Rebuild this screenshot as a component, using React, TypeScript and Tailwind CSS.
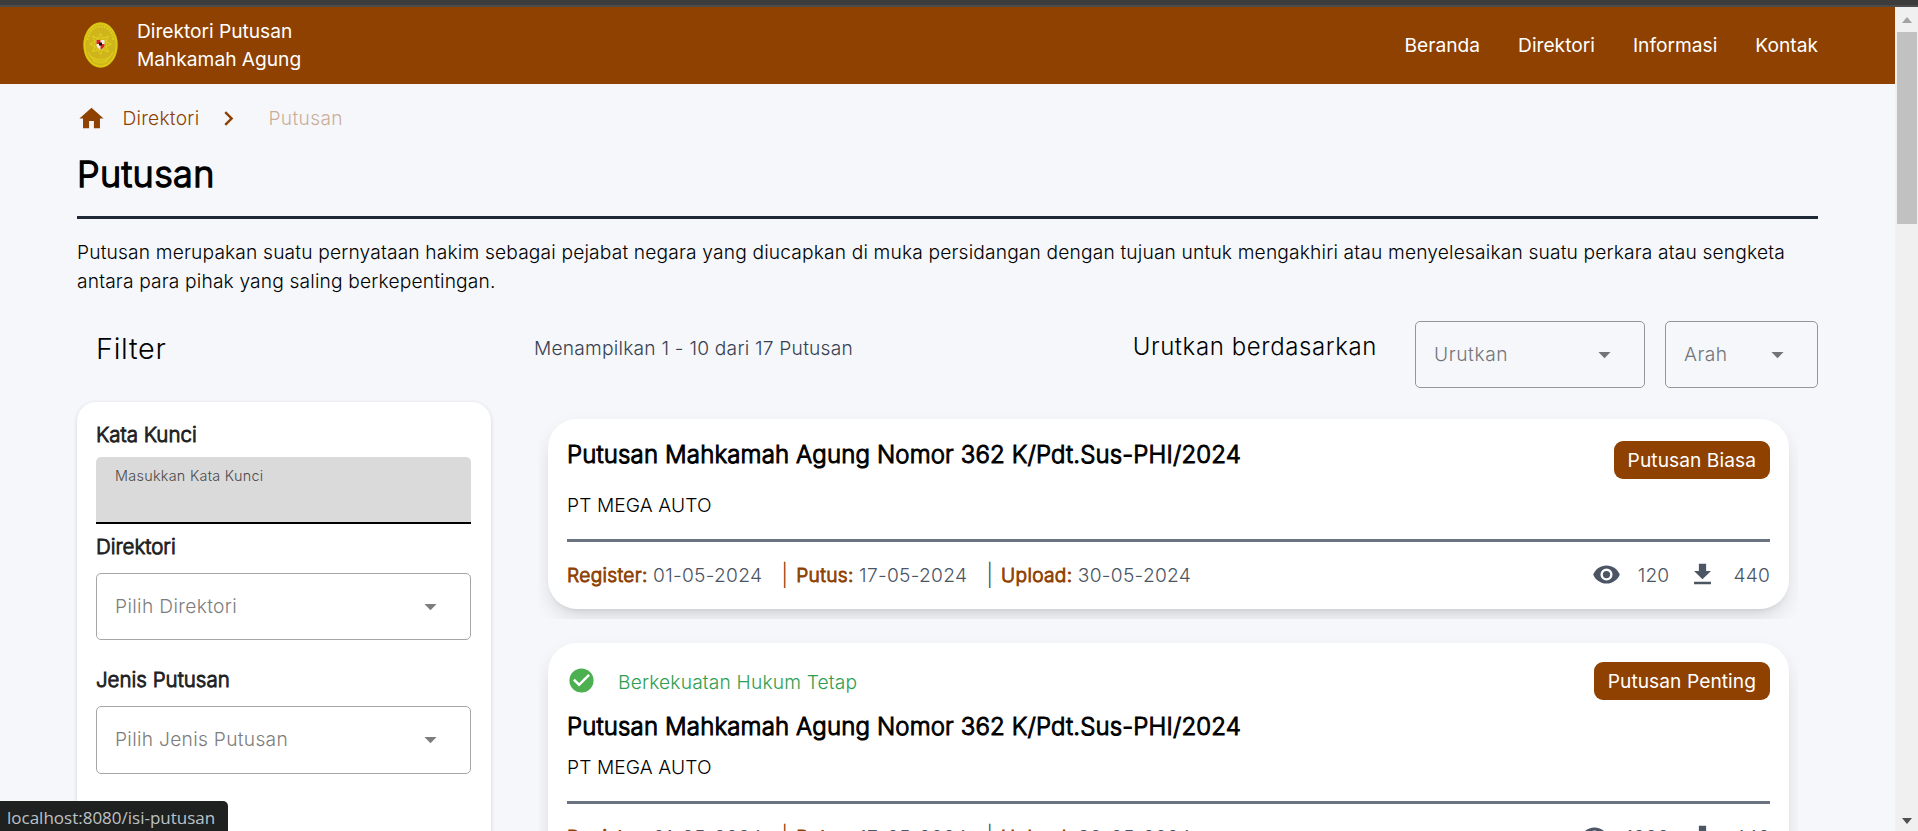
import React from "react";

const menu = ["Beranda", "Direktori", "Informasi", "Kontak"];

function Logo() {
  const rays = Array.from({ length: 8 }, (_, i) => i * 45);
  return (
    <svg className="block h-[46px] w-[35px]" viewBox="0 0 35 46">
      <ellipse cx="17.5" cy="23" rx="17.2" ry="22.8" fill="#dbc813" />
      <ellipse cx="17.5" cy="23" rx="15" ry="20.4" fill="#cfb41c" />
      <path d="M4.500 18C7 7 12 4.500 17.500 4.500S28 7 30.500 18" fill="none" stroke="#dfd01c" strokeWidth="2" strokeDasharray="1.7 1.3" />
      <path d="M5 30c4 10 21 10 25 0M7 34c5 7 16 7 21 0M10 38c4 4 11 4 15 0" fill="none" stroke="#dcca1c" strokeWidth="1.1" />
      {rays.map((r) => (
        <path key={r} d="M15.200 16.500 17.500 11l2.300 5.500z" fill="none" stroke="#dfd01c" strokeWidth="1" transform={`rotate(${r} 17.5 22)`} />
      ))}
      <circle cx="17.5" cy="22" r="6" fill="#cfb41c" stroke="#dcca1c" strokeWidth="0.8" />
      <path d="M13.500 18h8v5c0 2-2 3.500-4 4.500-2-1-4-2.500-4-4.500z" fill="#f3efe6" />
      <path d="M13.500 18h4v4h-4zM17.500 22h4v1c0 2-2 3.500-4 4.500z" fill="#d8261c" />
      <path d="M16 20.500h3v3h-3z" fill="#15130f" />
    </svg>
  );
}

function Arrow({ className }: { className: string }) {
  return (
    <svg className={`block h-[29px] w-[29px] ${className}`} viewBox="0 0 24 24" fill="currentColor">
      <path d="M7 10l5 5 5-5z" />
    </svg>
  );
}

function Select({ label, className, arrow }: { label: string; className: string; arrow: string }) {
  return (
    <div className={`flex items-center justify-between rounded-[5px] border pl-[18px] ${className}`}>
      <span>{label}</span>
      <Arrow className={arrow} />
    </div>
  );
}

type Item = { badge: string; views: string; downloads: string; final: boolean };

const items: Item[] = [
  { badge: "Putusan Biasa", views: "120", downloads: "440", final: false },
  { badge: "Putusan Penting", views: "1200", downloads: "440", final: true },
];

function Meta({ name, date }: { name: string; date: string }) {
  return (
    <span className="whitespace-nowrap">
      <b className="font-light tracking-[0.3px] text-[#8e4100] [-webkit-text-stroke:0.9px]">{name}:</b> <span className="tracking-[0.27px]">{date}</span>
    </span>
  );
}

function Title() {
  return (
    <h2 className="text-[24px] leading-[34px] font-light tracking-[0.14px] [-webkit-text-stroke:1px]">
      Putusan Mahkamah Agung Nomor 362 K/Pdt.Sus-PHI/2024
    </h2>
  );
}

function Label({ text, className }: { text: string; className: string }) {
  return <h4 className={`text-[20.5px] font-light text-[#212121] [-webkit-text-stroke:0.9px] ${className}`}>{text}</h4>;
}

function Card({ item }: { item: Item }) {
  return (
    <div className="w-[1259px] shrink-0 overflow-hidden rounded-[5px] px-[9px] py-[10px]">
      <article
        className={`rounded-[29px] bg-white px-[19px] shadow-[0_10px_22px_-3px_rgba(0,0,0,0.13),0_5px_7px_-5px_rgba(0,0,0,0.13)] ${item.final ? "h-[238px]" : "h-[190px]"}`}
      >
        <div className={`flex justify-between ${item.final ? "h-[67px] pt-[19px]" : "h-[69px] pt-[22px]"}`}>
          {item.final ? (
            <div className="flex h-[38px] items-center text-[#2e9e4f]">
              <svg className="mr-[22px] block h-[29px] w-[29px]" viewBox="0 0 24 24">
                <path fill="#4caf50" d="M12 2a10 10 0 1 0 0 20 10 10 0 0 0 0-20z" />
                <path fill="#fff" d="M10 17l-5-5 1.410-1.410L10 14.170l7.590-7.590L19 8z" />
              </svg>
              <span className="mt-[2px] tracking-[0.17px]">Berkekuatan Hukum Tetap</span>
            </div>
          ) : (
            <div className="mt-[-3px]">
              <Title />
            </div>
          )}
          <span className="flex h-[38px] items-center rounded-[9px] bg-[#8e4100] px-[14px] font-normal tracking-[0.05px] text-white">{item.badge}</span>
        </div>
        {item.final && <Title />}
        <p className={item.final ? "h-[57px] pt-[9px] tracking-[0.1px]" : "h-[51px] pt-[3px] tracking-[0.1px]"}>PT MEGA AUTO</p>
        <div className="h-[3px] bg-[#6b7280]" />
        <div className="flex h-[67px] items-center justify-between text-[#4b5563]">
          <div className="flex items-center">
            <Meta name="Register" date="01-05-2024" />
            <span className="mr-[8px] ml-[19px] text-[22px] text-[#8e4100]">|</span>
            <Meta name="Putus" date="17-05-2024" />
            <span className="mr-[8px] ml-[19px] text-[22px]">|</span>
            <Meta name="Upload" date="30-05-2024" />
          </div>
          <div className="flex items-center">
            <svg className="mt-[-2px] mr-[17px] block h-[29px] w-[29px]" viewBox="0 0 24 24" fill="currentColor">
              <path d="M12 9a3 3 0 0 0-3 3 3 3 0 0 0 3 3 3 3 0 0 0 3-3 3 3 0 0 0-3-3m0 8a5 5 0 0 1-5-5 5 5 0 0 1 5-5 5 5 0 0 1 5 5 5 5 0 0 1-5 5m0-12.500C7 4.500 2.730 7.610 1 12c1.730 4.390 6 7.500 11 7.500s9.270-3.110 11-7.500c-1.730-4.390-6-7.500-11-7.500z" />
            </svg>
            <span className="tracking-[0.2px]">{item.views}</span>
            <svg className="mt-[-2px] mr-[16px] ml-[19px] block h-[29px] w-[29px]" viewBox="0 0 24 24" fill="currentColor">
              <path d="M5 20h14v-2H5m14-9h-4V3H9v6H5l7 7z" />
            </svg>
            <span className="tracking-[0.2px]">{item.downloads}</span>
          </div>
        </div>
      </article>
    </div>
  );
}

export default function App() {
  return (
    <div className="relative flex h-[831px] w-[1918px] flex-col overflow-hidden bg-[#f5f7fb] font-['Inter',sans-serif] text-[19.2px] leading-[28.8px] font-light text-black">
      <div className="h-[7px] shrink-0 border-b-2 border-[#4b4b4b] bg-[#3c3c3c]" />
      <div className="flex min-h-0 flex-1">
        <div className="flex w-[1895px] flex-col overflow-hidden">
          <header className="flex h-[77px] shrink-0 items-center justify-between bg-[#8e4100] pr-[77px] pl-[83px] font-normal text-white">
            <div className="flex items-center gap-[19px]">
              <div className="mt-[-1px]">
                <Logo />
              </div>
              <div className="mt-[-2px] leading-[28px] tracking-[-0.03px]">
                Direktori Putusan
                <br />
                Mahkamah Agung
              </div>
            </div>
            <nav className="flex gap-[38px]">
              {menu.map((m) => (
                <a key={m}>{m}</a>
              ))}
            </nav>
          </header>

          <main className="flex flex-col px-[77px]">
            <div className="mt-[20px] flex h-[29px] items-center text-[#8e4100]">
              <svg className="block h-[29px] w-[29px]" viewBox="0 0 24 24" fill="currentColor">
                <path d="M10 20v-6h4v6h5v-8h3L12 3 2 12h3v8z" />
              </svg>
              <span className="ml-[16.500px] tracking-[0.25px]">Direktori</span>
              <svg className="ml-[15px] block h-[29px] w-[29px]" viewBox="0 0 24 24" fill="currentColor">
                <path d="M8.590 16.580L13.170 12 8.590 7.410 10 6l6 6-6 6z" />
              </svg>
              <span className="ml-[25px] tracking-[0.35px] opacity-40">Putusan</span>
            </div>
            <h1 className="mt-[20px] text-[36px] leading-[43px] font-light tracking-[0.35px] [-webkit-text-stroke:1.4px]">Putusan</h1>
            <div className="mt-[20px] h-[3px] shrink-0 bg-[#1f2937]" />
            <p className="mt-[19px] w-[1741px] tracking-[0.16px] whitespace-nowrap">
              Putusan merupakan suatu pernyataan hakim sebagai pejabat negara yang diucapkan di muka persidangan dengan tujuan untuk mengakhiri atau menyelesaikan suatu perkara atau sengketa
              <br />
              antara para pihak yang saling berkepentingan.
            </p>

            <div className="mt-[25.400px] flex h-[67px]">
              <h3 className="mt-[10px] w-[457px] pl-[19px] text-[28.8px] leading-[36px] tracking-[0.7px]">Filter</h3>
              <p className="mt-[13px] flex-1 tracking-[0.22px] text-[#374151]">Menampilkan 1 - 10 dari 17 Putusan</p>
              <p className="mt-[12px] mr-[38px] text-[24px] tracking-[0.6px]">Urutkan berdasarkan</p>
              <Select label="Urutkan" className="h-[67px] w-[230px] border-[#94969a] tracking-[0.6px] text-[#727478]" arrow="mr-[25px]" />
              <Select label="Arah" className="ml-[20px] h-[67px] w-[153px] border-[#94969a] tracking-[0.5px] text-[#727478]" arrow="mr-[25px]" />
            </div>

            <div className="mt-[14px] flex items-start">
              <aside className="h-[600px] w-[414px] shrink-0 rounded-[19px] bg-white px-[19px] pt-[19px] shadow-[0_1px_4px_rgba(0,0,0,0.14)]">
                <Label text="Kata Kunci" className="" />
                <div className="mt-[7.200px] h-[67px] w-[375px] rounded-t-[5px] border-b-2 border-black bg-[#dadada] pt-[5px] pl-[19px] text-[14.4px] tracking-[0.28px] text-[#4a4a4a]">
                  Masukkan Kata Kunci
                </div>
                <Label text="Direktori" className="mt-[9px]" />
                <Select label="Pilih Direktori" className="mt-[11px] h-[67px] w-[375px] border-[#a6a6a6] tracking-[0.35px] text-[#7d7d7d]" arrow="mr-[25px]" />
                <Label text="Jenis Putusan" className="mt-[26px]" />
                <Select label="Pilih Jenis Putusan" className="mt-[11px] h-[68px] w-[375px] border-[#a6a6a6] tracking-[0.3px] text-[#7d7d7d]" arrow="mr-[25px]" />
              </aside>
              <div className="mt-[7px] ml-[48px] flex flex-col gap-[14px]">
                {items.map((item) => (
                  <Card key={item.badge} item={item} />
                ))}
              </div>
            </div>
          </main>
        </div>
        <div className="flex w-[23px] flex-col items-center justify-between bg-[#f0f0f0]">
          <div className="flex flex-col items-center">
            <svg className="mt-[10px] block h-[6px] w-[10px]" viewBox="0 0 10 6">
              <path d="M0 6 5 0l5 6z" fill="#a3a3a3" />
            </svg>
            <div className="mt-[9px] h-[192px] w-[20px] bg-[#c1c1c1]" />
          </div>
          <svg className="mb-[7px] block h-[6px] w-[10px]" viewBox="0 0 10 6">
            <path d="M0 0l5 6 5-6z" fill="#505050" />
          </svg>
        </div>
      </div>
      <div className="absolute bottom-0 left-0 flex h-[30px] w-[228px] items-center rounded-tr-[5px] bg-[#1f2120] pt-[4px] pl-[7px] font-['Open_Sans',sans-serif] text-[17px] font-normal whitespace-nowrap text-[#bdc1c6]">
        localhost:8080/isi-putusan
      </div>
    </div>
  );
}
